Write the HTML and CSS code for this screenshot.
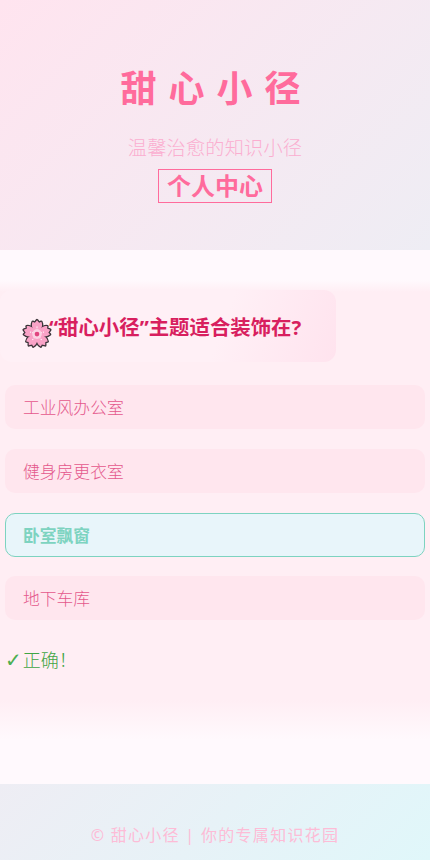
FILE: index.html
```html
<!DOCTYPE html>
<html lang="zh-CN">

<head>
    <meta charset="UTF-8">
    <meta name="viewport" content="width=device-width, initial-scale=1.0">
    <title>甜心小径</title>
    <link rel="stylesheet" href="styles.css">
</head>

<body>
    <header class="top">
        <h1 class="logo">甜心小径</h1>
        <p class="slogan">温馨治愈的知识小径</p>
        <a class="user-link" href="#">个人中心</a>
    </header>

    <main class="content">
        <section class="quiz">
            <h2 class="question">
                <svg class="flower" viewBox="0 0 28 28">
                    <defs>
                        <path id="petal" d="M14 15C9 11 8.500 6 10 3.500L12 4.500 14 2 16 4.500 18 3.500C19.500 6 19 11 14 15Z" />
                    </defs>
                    <g fill="#3a3338" stroke="#3a3338" stroke-width="2.400" stroke-linejoin="round">
                        <use href="#petal" />
                        <use href="#petal" transform="rotate(72 14 15)" />
                        <use href="#petal" transform="rotate(144 14 15)" />
                        <use href="#petal" transform="rotate(216 14 15)" />
                        <use href="#petal" transform="rotate(288 14 15)" />
                    </g>
                    <g fill="#f9a3c7">
                        <use href="#petal" />
                        <use href="#petal" transform="rotate(72 14 15)" />
                        <use href="#petal" transform="rotate(144 14 15)" />
                        <use href="#petal" transform="rotate(216 14 15)" />
                        <use href="#petal" transform="rotate(288 14 15)" />
                    </g>
                    <circle cx="14" cy="15" r="4.500" fill="#fbd3e3" />
                    <circle cx="14" cy="15" r="2.200" fill="#e0457f" />
                    <path d="M14 8v2.500M7.500 13l2.400.8M20.500 13l-2.400.8M9.800 20.500l1.500-2M18.200 20.500l-1.500-2" stroke="#fff" stroke-width="1" stroke-dasharray="1 1" />
                </svg>
                <span>“甜心小径”主题适合装饰在?</span>
            </h2>
            <div class="option">工业风办公室</div>
            <div class="option">健身房更衣室</div>
            <div class="option right">卧室飘窗</div>
            <div class="option">地下车库</div>
            <p class="result"><span class="tick">✓</span><span>正确！</span></p>
        </section>
    </main>

    <footer class="bottom">© 甜心小径 | 你的专属知识花园</footer>
</body>

</html>
```

FILE: styles.css
```css
* {
    box-sizing: border-box;
}

body {
    margin: 0;
    height: 860px;
    overflow: hidden;
    background: #fff9fd;
    font-family: "Noto Sans", "Noto Sans CJK SC", sans-serif;
}

.top {
    height: 250px;
    padding-top: 63px;
    background: linear-gradient(135deg, #ffe4ef, #eeedf4);
    text-align: center;
}

.logo {
    margin: 0;
    padding-left: 3px;
    font-size: 36px;
    line-height: 52px;
    font-weight: 700;
    letter-spacing: 12px;
    color: #ff6b9c;
}

.slogan {
    margin: 19px 0 7px;
    font-size: 19.200px;
    line-height: 28px;
    letter-spacing: 0.200px;
    font-weight: 300;
    color: #fbaed0;
}

.user-link {
    display: inline-block;
    width: 114px;
    height: 34px;
    border: 1px solid #ff6b9c;
    font-size: 24px;
    line-height: 32px;
    font-weight: 700;
    color: #ff6b9c;
    text-decoration: none;
}

.content {
    height: 534px;
    padding-top: 30px;
}

.quiz {
    height: 460px;
    padding-top: 10px;
    background: linear-gradient(180deg, #fff9fd 0, #ffeef4 12px, #ffeef4 420px, #fff9fd 100%);
}

.question {
    display: flex;
    align-items: flex-start;
    width: 336px;
    height: 72px;
    margin: 0 0 23.200px;
    padding: 24px 0 0 22px;
    border-radius: 12px;
    background: linear-gradient(110deg, #fff0f6 65%, #ffe3ee);
    font-size: 20.400px;
    line-height: 26px;
    font-weight: 700;
    color: #d81f5f;
}

.flower {
    width: 30px;
    height: 30px;
    margin: 4px -3px 0 0;
    flex-shrink: 0;
}

.option {
    height: 44px;
    margin: 0 5px 19.700px;
    padding: 1px 0 0 18px;
    border-radius: 10px;
    background: #ffe6ee;
    font-size: 16.800px;
    line-height: 44px;
    font-weight: 300;
    color: #e4588c;
}

.right {
    border: 1px solid #7dd3c0;
    padding-left: 17px;
    line-height: 42px;
    background: #e8f5fa;
    color: #7dd3c0;
    font-weight: 700;
}

.result {
    display: flex;
    gap: 1px;
    margin: 27px 5px 0;
    font-size: 18px;
    line-height: 26px;
    font-weight: 300;
    color: #3fa544;
}

.tick {
    font-family: "DejaVu Sans", sans-serif;
    font-size: 20px;
    font-weight: 700;
    color: #4caf50;
}

.bottom {
    height: 76px;
    padding-top: 39px;
    background: linear-gradient(135deg, #eeedf4, #e0f7fa);
    text-align: center;
    font-size: 16px;
    line-height: 24px;
    letter-spacing: 1.300px;
    color: #fdbcd6;
}
```
